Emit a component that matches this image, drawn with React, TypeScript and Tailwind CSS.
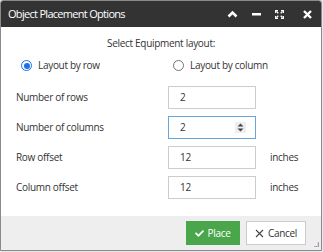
import { FaCheck } from "react-icons/fa";

function Radio({ checked }: { checked: boolean }) {
  return checked ? (
    <span className="flex h-[11px] w-[11px] items-center justify-center rounded-full border-[1.5px] border-[#1a73e8] bg-white">
      <span className="h-[6px] w-[6px] rounded-full bg-[#1a73e8]" />
    </span>
  ) : (
    <span className="h-[11px] w-[11px] rounded-full border border-[#767676] bg-white" />
  );
}

function Row({ label, value, unit, focused, spinner }: { label: string; value: string; unit?: string; focused?: boolean; spinner?: boolean }) {
  return (
    <div className="flex h-[23px] items-center">
      <div className="w-[152px]">{label}</div>
      <div
        className={
          "flex h-[23px] w-[88px] items-center justify-between pl-[11px] pr-[9px] " +
          (focused ? "border border-[#66a6dd]" : "border border-[#cccccc]")
        }
      >
        <span>{value}</span>
        {spinner && (
          <span className="flex h-[11px] w-[11px] items-center justify-center bg-[#eeeeee]">
            <svg width="7" height="9" viewBox="0 0 7 9">
              <path d="M3.5 0.5 L6.5 3.5 H0.5 Z M3.5 8.5 L6.5 5.5 H0.5 Z" fill="#444" />
            </svg>
          </span>
        )}
      </div>
      {unit && <div className="ml-[14px]">{unit}</div>}
    </div>
  );
}

export default function App() {
  return (
    <div className="h-[252px] w-[323px] bg-[#e4e7ea] font-['Open_Sans',sans-serif] text-[10px] tracking-[-0.3px] text-[#333333]">
      <div className="flex h-[251px] w-[322px] flex-col overflow-hidden rounded-t-[3px] border border-[#8a8a8a] bg-white">
        <div className="flex h-[26px] shrink-0 items-center bg-[#333333] pl-[7px] pr-[9px] text-white">
          <div className="flex-1 text-[11px] tracking-[-0.7px]">Object Placement Options</div>
          <div className="flex items-center gap-[13px]">
            <svg width="11" height="8" viewBox="0 0 11 8">
              <path d="M1.5 6.5 L5.5 2.5 L9.5 6.5" stroke="white" strokeWidth="2.6" fill="none" />
            </svg>
            <svg width="9" height="8" viewBox="0 0 9 8" className="ml-[1px]">
              <rect x="0" y="3" width="9" height="2.5" fill="white" />
            </svg>
            <svg width="9" height="9" viewBox="0 0 9 9" className="ml-[1px]">
              <path d="M0 0 H3 V1.2 H1.2 V3 H0 Z M9 0 H6 V1.2 H7.8 V3 H9 Z M0 9 H3 V7.8 H1.2 V6 H0 Z M9 9 H6 V7.8 H7.8 V6 H9 Z" fill="white" />
              <path d="M1.5 1.5 L3.3 3.3 M7.5 1.5 L5.7 3.3 M1.5 7.5 L3.3 5.7 M7.5 7.5 L5.7 5.7" stroke="white" strokeWidth="1.3" />
            </svg>
            <svg width="9" height="9" viewBox="0 0 9 9" className="ml-[6px]">
              <path d="M1 1 L8 8 M8 1 L1 8" stroke="white" strokeWidth="2.4" />
            </svg>
          </div>
        </div>
        <div className="flex flex-1 flex-col">
          <div className="mt-[9px] text-center">Select Equipment layout:</div>
          <div className="mt-[7px] flex items-center pl-[20px]">
            <Radio checked />
            <span className="ml-[6px] w-[135px]">Layout by row</span>
            <Radio checked={false} />
            <span className="ml-[6px]">Layout by column</span>
          </div>
          <div className="mt-[13px] flex flex-col gap-[7px] pl-[15px]">
            <Row label="Number of rows" value="2" />
            <Row label="Number of columns" value="2" focused spinner />
            <Row label="Row offset" value="12" unit="inches" />
            <Row label="Column offset" value="12" unit="inches" />
          </div>
        </div>
        <div className="relative flex h-[34px] shrink-0 items-center justify-end gap-[6px] bg-[#eeeeee] pr-[15px]">
          <button className="flex h-[24px] w-[54px] items-center justify-center gap-[3px] bg-[#49a64b] text-white">
            <FaCheck className="h-[9px] w-[9px]" />
            <span>Place</span>
          </button>
          <button className="flex h-[24px] w-[60px] items-center justify-center gap-[4px] border border-[#cccccc] bg-white">
            <svg width="9" height="9" viewBox="0 0 9 9">
              <path d="M1 1 L8 8 M8 1 L1 8" stroke="#444" strokeWidth="1.1" />
            </svg>
            <span>Cancel</span>
          </button>
          <span className="absolute bottom-[2px] right-[2px] text-[8px] leading-none text-[#555]">..i</span>
        </div>
      </div>
    </div>
  );
}
